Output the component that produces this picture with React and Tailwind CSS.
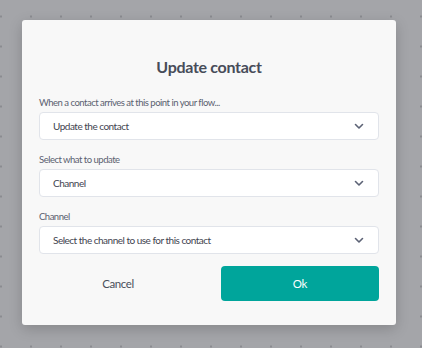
import React from 'react';

function Chevron() {
  return (
    <svg className="w-[10px] h-[10px] text-[#5c6275]" viewBox="0 0 10 10" fill="none">
      <path d="M1.5 3.5L5 7l3.5-3.5" stroke="currentColor" strokeWidth="1.6" strokeLinecap="round" strokeLinejoin="round" />
    </svg>
  );
}

function Field({ label, value }) {
  return (
    <div className="flex flex-col">
      <label className="text-[9.5px] leading-[14px] tracking-[-0.5px] text-[#5b6170] mb-[2px]">{label}</label>
      <div className="h-[28px] bg-white border border-[#e1e4ea] rounded-[4px] flex items-center justify-between pl-[13px] pr-[14px]">
        <span className="text-[10px] tracking-[-0.5px] text-[#3f4450]">{value}</span>
        <Chevron />
      </div>
    </div>
  );
}

export default function App() {
  return (
    <div
      className="w-[422px] h-[348px] bg-[#a4a5a9] bg-[radial-gradient(circle,#8b8c91_1px,transparent_1.5px)] bg-[length:30px_30px] bg-[position:-14px_1.5px] overflow-hidden"
      style={{ fontFamily: 'Lato, "Open Sans", sans-serif' }}
    >
      <div className="ml-[22px] mt-[20px] w-[374px] h-[305px] bg-[#f8f8f8] rounded-[3px] shadow-[0_4px_14px_rgba(0,0,0,0.18)] px-[17px] pt-[37px] pb-[24px] flex flex-col">
        <h2 className="text-center text-[16px] leading-[20px] tracking-[-0.3px] font-bold text-[#474c59]">Update contact</h2>

        <div className="mt-[19px] flex flex-col gap-[13px]">
          <Field label="When a contact arrives at this point in your flow..." value="Update the contact" />
          <Field label="Select what to update" value="Channel" />
          <Field label="Channel" value="Select the channel to use for this contact" />
        </div>

        <div className="mt-[12px] grid grid-cols-2 gap-6">
          <button className="h-[35px] text-[11.5px] tracking-[-0.4px] text-[#4a4f5b]">Cancel</button>
          <button className="h-[35px] rounded-[4px] bg-[#00a59b] text-white text-[11.5px] tracking-[-0.3px]">Ok</button>
        </div>
      </div>
    </div>
  );
}
